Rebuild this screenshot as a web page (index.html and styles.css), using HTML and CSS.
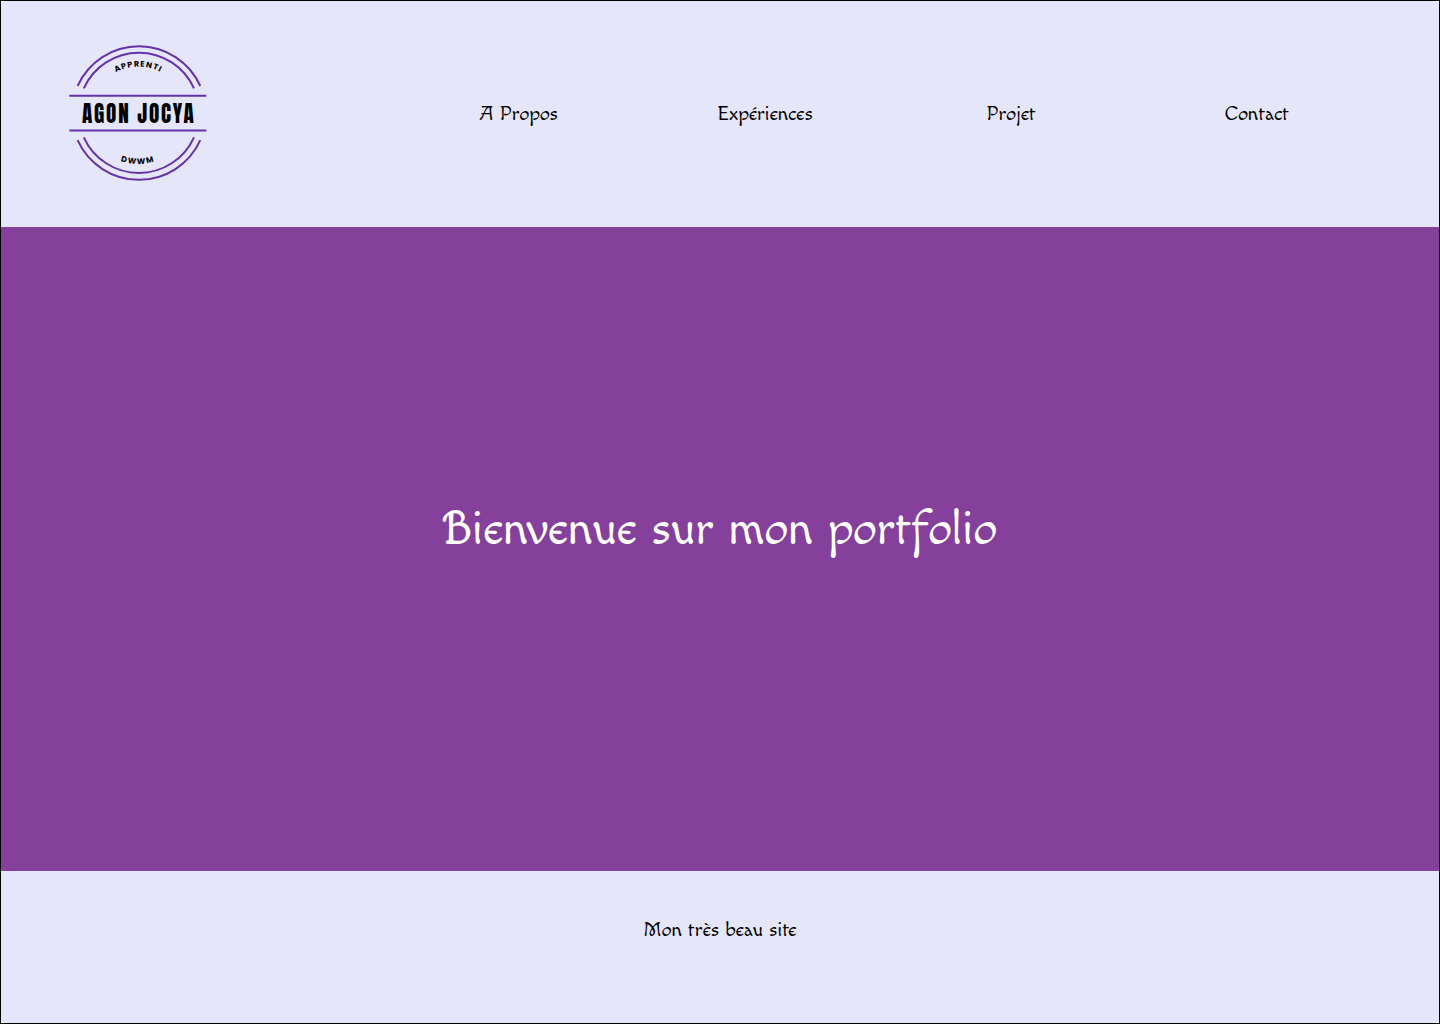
FILE: index.html
```html
<!DOCTYPE html>
<html lang="fr">
<head>
<meta charset="utf-8">
<title>Portfolio - Agon Jocya</title>
<link rel="stylesheet" href="styles.css">
</head>
<body>
<header class="header">
  <svg class="logo" viewBox="0 0 140 140" role="img" aria-label="Agon Jocya">
    <defs>
      <path id="arc-top" d="M24 69A46.500 46.500 0 0 1 117 69"/>
      <path id="arc-bottom" d="M19 69A51 51 0 0 0 121 69"/>
    </defs>
    <g class="logo-lines">
      <path d="M9.600 42A67.300 67.300 0 0 1 132.300 42M9.600 96.200A67.300 67.300 0 0 0 132.300 96.200"/>
      <path d="M15.800 44.300A60.400 60.400 0 0 1 126 44.300M15.800 93.300A60.400 60.400 0 0 0 126 93.300"/>
      <path d="M1.300 51.800H138.300M1.300 86.600H138.300"/>
    </g>
    <text class="logo-small"><textPath href="#arc-top" startOffset="49.500%" text-anchor="middle" textLength="46">APPRENTI</textPath></text>
    <text class="logo-name" transform="translate(14 79) scale(.92 1)" textLength="121.500" lengthAdjust="spacing">AGON JOCYA</text>
    <text class="logo-small"><textPath href="#arc-bottom" startOffset="49.500%" text-anchor="middle" textLength="34">DWWM</textPath></text>
  </svg>
  <nav class="nav">
    <a class="nav-link" href="#">A Propos</a>
    <a class="nav-link" href="#">Expériences</a>
    <a class="nav-link" href="#">Projet</a>
    <a class="nav-link" href="#">Contact</a>
  </nav>
</header>
<main class="hero">
  <h1 class="title">Bienvenue sur mon portfolio</h1>
</main>
<footer class="footer"><p class="note">Mon très beau site</p></footer>
</body>
</html>
```
FILE: styles.css
```css
* { box-sizing: border-box; }
body {
  margin: 0;
  height: 1024px;
  display: grid;
  grid-template-rows: 226px 644px 1fr;
  border: 1px solid #000;
  background: #e6e6fa;
  color: #000;
  font-family: Macondo, Lato, sans-serif;
  font-size: 20px;
}
.header {
  display: flex;
  align-items: center;
  padding: 0 60px 0 67px;
}
.logo { width: 140px; height: 140px; flex: none; }
.logo-lines { fill: none; stroke: #6533a9; stroke-width: 2; }
.logo-small { font: 700 8px Poppins, "Open Sans", sans-serif; }
.logo-name { font: 400 23px Anton, "Bebas Neue", Oswald, "Liberation Sans", sans-serif; }
.nav {
  flex: 1;
  display: grid;
  grid-template-columns: repeat(4, 246px);
  justify-content: end;
  margin-right: -1px;
}
.nav-link { color: inherit; text-decoration: none; text-align: center; white-space: nowrap; }
.hero {
  display: flex;
  align-items: center;
  justify-content: center;
  background: #85409b;
  color: #fff;
}
.title {
  margin: 0;
  padding-bottom: 40px;
  font-family: "Macondo Swash Caps", Macondo, Lato, sans-serif;
  font-size: 48px;
  font-weight: 400;
  white-space: nowrap;
}
.footer { display: flex; justify-content: center; padding-top: 47px; }
.note { margin: 0; white-space: nowrap; }
```
